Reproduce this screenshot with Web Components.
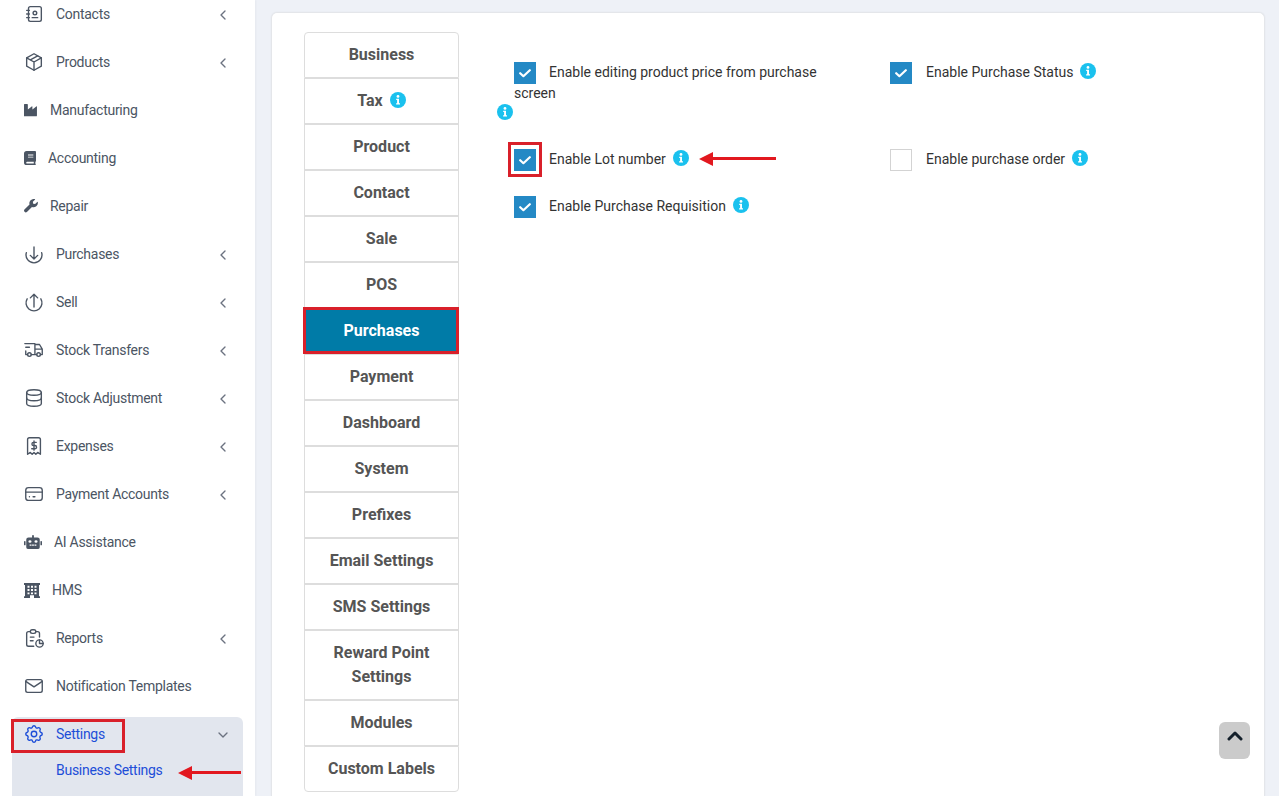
<!DOCTYPE html>
<html lang="en">
<head>
<meta charset="utf-8">
<title>Business Settings</title>
<style>
  html, body { margin: 0; height: 796px; overflow: hidden; }
  body { background: #eef1f7; font-family: Roboto, "Liberation Sans", sans-serif; position: relative; }
  .app { display: flex; height: 796px; overflow: hidden; }
</style>
</head>
<body>
<div class="app">
  <side-bar>
    <nav-item icon="contacts" arrow="left">Contacts</nav-item>
    <nav-item icon="products" arrow="left">Products</nav-item>
    <nav-item icon="industry" solid="14">Manufacturing</nav-item>
    <nav-item icon="book" solid="12">Accounting</nav-item>
    <nav-item icon="wrench" solid="14">Repair</nav-item>
    <nav-item icon="purchases" arrow="left">Purchases</nav-item>
    <nav-item icon="sell" arrow="left">Sell</nav-item>
    <nav-item icon="truck" arrow="left">Stock Transfers</nav-item>
    <nav-item icon="database" arrow="left">Stock Adjustment</nav-item>
    <nav-item icon="receipt" arrow="left">Expenses</nav-item>
    <nav-item icon="card" arrow="left">Payment Accounts</nav-item>
    <nav-item icon="robot" solid="18">AI Assistance</nav-item>
    <nav-item icon="hospital" solid="16">HMS</nav-item>
    <nav-item icon="reports" arrow="left">Reports</nav-item>
    <nav-item icon="mail">Notification Templates</nav-item>
    <nav-group>
      <nav-item icon="settings" arrow="down" active>Settings</nav-item>
      <sub-item>Business Settings</sub-item>
    </nav-group>
  </side-bar>
  <settings-card>
    <tab-list slot="tabs">
      <tab-item>Business</tab-item>
      <tab-item>Tax <info-dot></info-dot></tab-item>
      <tab-item>Product</tab-item>
      <tab-item>Contact</tab-item>
      <tab-item>Sale</tab-item>
      <tab-item>POS</tab-item>
      <tab-item active>Purchases</tab-item>
      <tab-item>Payment</tab-item>
      <tab-item>Dashboard</tab-item>
      <tab-item>System</tab-item>
      <tab-item>Prefixes</tab-item>
      <tab-item>Email Settings</tab-item>
      <tab-item>SMS Settings</tab-item>
      <tab-item>Reward Point Settings</tab-item>
      <tab-item>Modules</tab-item>
      <tab-item>Custom Labels</tab-item>
    </tab-list>
    <check-option checked tight drop-info>Enable editing product price from purchase screen</check-option>
    <check-option checked>Enable Purchase Status</check-option>
    <check-option checked tight>Enable Lot number</check-option>
    <check-option>Enable purchase order</check-option>
    <check-option checked tight>Enable Purchase Requisition</check-option>
  </settings-card>
</div>

<!-- the red marks drawn on top of the screenshot -->
<mark-box style="left:11px;top:719px;width:114px;height:34px"></mark-box>
<mark-box style="left:508px;top:142px;width:34px;height:35px"></mark-box>
<mark-box style="left:303px;top:307px;width:156px;height:47px"></mark-box>
<mark-arrow style="left:699px;top:151px;width:77px"></mark-arrow>
<mark-arrow style="left:178px;top:765px;width:63px"></mark-arrow>
<top-button></top-button>

<script>
const stroke = {
  contacts: '<path d="M20 6v12a2 2 0 0 1 -2 2h-10a2 2 0 0 1 -2 -2v-12a2 2 0 0 1 2 -2h10a2 2 0 0 1 2 2z"/><path d="M10 16h6"/><circle cx="13" cy="11" r="2"/><path d="M4 8h3M4 12h3M4 16h3"/>',
  products: '<path d="M12 3l8 4.500v9l-8 4.500l-8 -4.500v-9z"/><path d="M12 12l8 -4.500M12 12v9M12 12l-8 -4.500M16 5.250l-8 4.500"/>',
  purchases: '<path d="M3.670 10.500a8.700 8.700 0 1 0 16.660 0"/><path d="M12 4.400v13M8 13.500l4 4l4 -4"/>',
  sell: '<path d="M4.540 8.500a8.700 8.700 0 1 0 14.920 0"/><path d="M12 17.500v-14M8 7.500l4 -4l4 4"/>',
  truck: '<circle cx="7" cy="17" r="2"/><circle cx="17" cy="17" r="2"/><path d="M5 17h-2v-4M2 5h11v12M9 17h6M19 17h2v-6h-8M13 6h5l3 5M3 9h4"/>',
  database: '<ellipse cx="12" cy="6" rx="8" ry="3"/><path d="M4 6v6a8 3 0 0 0 16 0v-6"/><path d="M4 12v6a8 3 0 0 0 16 0v-6"/>',
  receipt: '<path d="M5 21v-16a2 2 0 0 1 2 -2h10a2 2 0 0 1 2 2v16l-3 -2l-2 2l-2 -2l-2 2l-2 -2z"/><path d="M14.500 8h-3a1.500 1.500 0 0 0 0 3.500h1.500a1.500 1.500 0 0 1 0 3.500h-3.500M12 6.500v10"/>',
  card: '<rect x="3" y="5" width="18" height="14" rx="3"/><path d="M3 10h18M7 15h.01M11 15h2"/>',
  reports: '<path d="M8 5h-2a2 2 0 0 0 -2 2v12a2 2 0 0 0 2 2h5.700"/><path d="M18 14v4h4"/><path d="M18 11v-4a2 2 0 0 0 -2 -2h-2"/><rect x="8" y="3" width="6" height="4" rx="2"/><circle cx="18" cy="18" r="4"/><path d="M8 11h4M8 15h3"/>',
  mail: '<rect x="3" y="5" width="18" height="14" rx="2"/><path d="M3 7l9 6l9 -6"/>',
  settings: '<path d="M10.325 4.317c.426 -1.756 2.924 -1.756 3.35 0a1.724 1.724 0 0 0 2.573 1.066c1.543 -.94 3.31 .826 2.37 2.37a1.724 1.724 0 0 0 1.065 2.572c1.756 .426 1.756 2.924 0 3.35a1.724 1.724 0 0 0 -1.066 2.573c.94 1.543 -.826 3.31 -2.37 2.37a1.724 1.724 0 0 0 -2.572 1.065c-.426 1.756 -2.924 1.756 -3.35 0a1.724 1.724 0 0 0 -2.573 -1.066c-1.543 .94 -3.31 -.826 -2.37 -2.37a1.724 1.724 0 0 0 -1.065 -2.572c-1.756 -.426 -1.756 -2.924 0 -3.35a1.724 1.724 0 0 0 1.066 -2.573c-.94 -1.543 .826 -3.31 2.37 -2.37c1 .608 2.296 .07 2.572 -1.065z"/><circle cx="12" cy="12" r="3"/>'
};

// filled icons: [viewBox, rendered height, shape]
const solid = {
  industry: ['0 1.800 16 14.200', 13, '<path d="M0 2.500a.7.7 0 0 1 .7-.7h3a.7.7 0 0 1 .7.7v5.200l4.400-3.300a.5.5 0 0 1 .8.400v2.900l4.400-3.300a.5.5 0 0 1 .8.400v9.500a1 1 0 0 1-1 1h-13.800a1 1 0 0 1-1-1z"/>'],
  book: ['.500 0 13.500 16', 14, '<path fill-rule="evenodd" d="M3.500 0h9.500a1 1 0 0 1 1 1v10.500a1 1 0 0 1-.7.900v2.100a.8.8 0 0 1 0 1.500h-9.800a3 3 0 0 1-3-3v-10a3 3 0 0 1 3-3zm.5 12.300a1 1 0 0 0 0 2h7.500v-2zm1-8.300v1h6v-1zm0 2.500v1h6v-1z"/>'],
  wrench: ['0 0 16 16', 14, '<path d="M15.800 3.600a.4.400 0 0 0-.7-.2l-2.400 2.400-2.200-.4-.4-2.200 2.400-2.400a.4.400 0 0 0-.2-.7 5 5 0 0 0-6 6.200l-5.800 5.800a2 2 0 0 0 2.800 2.800l5.800-5.800a5 5 0 0 0 6.700-5.500z"/>'],
  robot: ['0 0 16 15', 14, '<path fill-rule="evenodd" d="M8 0a.8.8 0 0 1 .8.8v2h3.200a2 2 0 0 1 2 2v8.200a2 2 0 0 1-2 2h-8a2 2 0 0 1-2-2v-8.200a2 2 0 0 1 2-2h3.200v-2a.8.8 0 0 1 .8-.8zm-2.700 5.500a1.400 1.400 0 1 0 0 2.800 1.400 1.400 0 0 0 0-2.800zm5.400 0a1.400 1.400 0 1 0 0 2.800 1.400 1.400 0 0 0 0-2.800zm-5.700 4.700v1.300h1.700v-1.300zm2.200 0v1.300h1.600v-1.300zm2.100 0v1.300h1.700v-1.300z"/><rect x="0" y="6.500" width="1.400" height="4.500" rx=".6"/><rect x="14.600" y="6.500" width="1.400" height="4.500" rx=".6"/>'],
  hospital: ['0 0 16 16', 15, '<path fill-rule="evenodd" d="M0 0h16v2h-1v12h1v2h-6v-3h-4v3h-6v-2h1v-12h-1zm3.500 3v2h2v-2zm3.500 0v2h2v-2zm3.500 0v2h2v-2zm-7 3.500v2h2v-2zm3.500 0v2h2v-2zm3.500 0v2h2v-2zm-7 3.500v2h2v-2zm7 0v2h2v-2zm-3.500 0v2h2v-2z"/>']
};

function tablerSvg(inner, size) {
  return `<svg width="${size}" height="${size}" viewBox="0 0 24 24" fill="none" stroke="currentColor" stroke-width="1.5" stroke-linecap="round" stroke-linejoin="round">${inner}</svg>`;
}

class SideBar extends HTMLElement {
  constructor() {
    super();
    this.attachShadow({ mode: 'open' }).innerHTML = `
      <style>
        :host { display: block; flex: 0 0 255px; box-sizing: border-box; height: 796px; overflow: hidden; background: #fff; padding: 0 12px; box-shadow: 1px 0 2px rgba(0,0,0,.04); }
        .list { display: flex; flex-direction: column; gap: 12px; margin-top: -4px; }
      </style>
      <div class="list"><slot></slot></div>`;
  }
}
customElements.define('side-bar', SideBar);

class NavItem extends HTMLElement {
  constructor() {
    super();
    const name = this.getAttribute('icon');
    const width = this.getAttribute('solid');
    const arrow = this.getAttribute('arrow');
    const icon = width
      ? `<svg style="width:${width}px;height:${solid[name][1]}px" viewBox="${solid[name][0]}" preserveAspectRatio="none" fill="currentColor">${solid[name][2]}</svg>`
      : tablerSvg(stroke[name], 22);
    const chevrons = { left: 'M15 6l-6 6l6 6', down: 'M6 9l6 6l6 -6' };
    this.attachShadow({ mode: 'open' }).innerHTML = `
      <style>
        :host { display: flex; align-items: center; height: 36px; box-sizing: border-box; padding: 0 12px 0 11px; color: #4b5563; font-size: 14px; letter-spacing: -.28px; gap: 11px; }
        :host([solid]) { padding-left: 12px; gap: 12px; }
        :host([active]) { color: #1d4ed8; }
        svg { flex: none; display: block; }
        .text { flex: 1; white-space: nowrap; }
        .chev { color: #6b7280; margin-top: 2px; }
      </style>
      ${icon}<span class="text"><slot></slot></span>
      ${arrow ? `<svg class="chev" width="16" height="16" viewBox="0 0 24 24" fill="none" stroke="currentColor" stroke-width="2" stroke-linecap="round" stroke-linejoin="round"><path d="${chevrons[arrow]}"/></svg>` : ''}`;
  }
}
customElements.define('nav-item', NavItem);

class NavGroup extends HTMLElement {
  constructor() {
    super();
    this.attachShadow({ mode: 'open' }).innerHTML = `
      <style>
        :host { display: block; background: #e2e6ee; border-radius: 6px 6px 0 0; height: 100px; margin-top: 1px; }
        ::slotted(nav-item) { margin-top: -1px; }
      </style>
      <slot></slot>`;
  }
}
customElements.define('nav-group', NavGroup);

class SubItem extends HTMLElement {
  constructor() {
    super();
    this.attachShadow({ mode: 'open' }).innerHTML = `
      <style>:host { display: flex; align-items: center; height: 36px; padding-left: 44px; color: #1d4ed8; font-size: 14px; letter-spacing: -.28px; }</style>
      <slot></slot>`;
  }
}
customElements.define('sub-item', SubItem);

class SettingsCard extends HTMLElement {
  constructor() {
    super();
    this.attachShadow({ mode: 'open' }).innerHTML = `
      <style>
        :host { display: flex; flex: 1; min-width: 0; box-sizing: border-box; margin: 12px 14px 0 16px; padding: 19px 32px; background: #fff; border: 1px solid #e4e6ea; border-bottom: 0; border-radius: 6px 6px 0 0; box-shadow: 0 0 2px rgba(0,0,0,.05); }
        .options { flex: 1; min-width: 0; display: grid; grid-template-columns: 376px 1fr; grid-template-rows: 87px 47px 47px; align-content: start; margin: 30px 0 0 55px; }
      </style>
      <slot name="tabs"></slot>
      <div class="options"><slot></slot></div>`;
  }
}
customElements.define('settings-card', SettingsCard);

class TabList extends HTMLElement {
  constructor() {
    super();
    this.attachShadow({ mode: 'open' }).innerHTML = `
      <style>:host { display: block; flex: 0 0 155px; align-self: flex-start; }</style>
      <slot></slot>`;
  }
}
customElements.define('tab-list', TabList);

class TabItem extends HTMLElement {
  constructor() {
    super();
    this.attachShadow({ mode: 'open' }).innerHTML = `
      <style>
        :host { display: block; box-sizing: border-box; padding: 10px 15px; border: 1px solid #ddd; background: #fff; color: #555; font-size: 16px; font-weight: 700; line-height: 24px; text-align: center; }
        :host(:first-child) { border-radius: 4px 4px 0 0; }
        :host(:last-child) { border-radius: 0 0 4px 4px; }
        :host([active]) { background: #007ba7; color: #fff; }
      </style>
      <slot></slot>`;
  }
}
customElements.define('tab-item', TabItem);

class InfoDot extends HTMLElement {
  constructor() {
    super();
    this.attachShadow({ mode: 'open' }).innerHTML = `
      <style>
        :host { display: inline-block; width: 16px; height: 16px; vertical-align: -2px; margin-left: 3px; }
        svg { display: block; }
      </style>
      <svg width="16" height="16" viewBox="0 0 16 16"><circle cx="8" cy="8" r="8" fill="#1ac1ee"/><circle cx="8" cy="4.400" r="1.400" fill="#fff"/><path d="M6.200 6.800h2.800v4.400h1v1.300h-3.900v-1.300h1v-3.100h-.9z" fill="#fff"/></svg>`;
  }
}
customElements.define('info-dot', InfoDot);

class CheckOption extends HTMLElement {
  constructor() {
    super();
    const dropped = this.hasAttribute('drop-info');
    this.attachShadow({ mode: 'open' }).innerHTML = `
      <style>
        :host { display: block; width: 340px; color: #333; font-size: 14px; line-height: 18px; }
        .box { display: inline-block; box-sizing: border-box; width: 22px; height: 22px; margin-right: 14px; vertical-align: -7px; border: 1px solid #d3d3d3; background: #fff; }
        :host([tight]) .box { margin-right: 13px; }
        :host([checked]) .box { background: #2489c5; border-color: #2489c5; }
        .box svg { display: none; margin: 4px; }
        :host([checked]) .box svg { display: block; }
        info-dot { margin-left: 3px; }
        :host([tight]) info-dot { margin-left: 4px; }
        :host([tight]) info-dot.drop, info-dot.drop { display: block; margin: 2px 0 0 -17px; }
      </style>
      <span class="box"><svg width="12" height="12" viewBox="0 0 12 12" fill="none" stroke="#fff" stroke-width="2.200" stroke-linecap="round" stroke-linejoin="round"><path d="M1.200 6.200l3.200 3l6.400 -6"/></svg></span><slot></slot>
      <info-dot class="${dropped ? 'drop' : ''}"></info-dot>`;
  }
}
customElements.define('check-option', CheckOption);

class MarkBox extends HTMLElement {
  constructor() {
    super();
    this.attachShadow({ mode: 'open' }).innerHTML = `
      <style>:host { display: block; position: absolute; box-sizing: border-box; border: 3px solid #d9202a; pointer-events: none; }</style>`;
  }
}
customElements.define('mark-box', MarkBox);

class MarkArrow extends HTMLElement {
  constructor() {
    super();
    this.attachShadow({ mode: 'open' }).innerHTML = `
      <style>
        :host { display: flex; align-items: center; position: absolute; height: 15px; }
        .head { width: 0; height: 0; border: solid transparent; border-width: 7px 14px 7px 0; border-right-color: #e2181f; flex: none; }
        .line { flex: 1; height: 3px; background: #e2181f; }
      </style>
      <span class="head"></span><span class="line"></span>`;
  }
}
customElements.define('mark-arrow', MarkArrow);

class TopButton extends HTMLElement {
  constructor() {
    super();
    this.attachShadow({ mode: 'open' }).innerHTML = `
      <style>
        :host { display: flex; justify-content: center; padding-top: 8px; box-sizing: border-box; position: absolute; left: 1219px; top: 722px; width: 31px; height: 37px; background: #cbcbcb; border-radius: 6px; }
        svg { display: block; }
      </style>
      <svg width="16" height="12" viewBox="0 0 16 12" fill="none" stroke="#14202b" stroke-width="3" stroke-linecap="round" stroke-linejoin="round"><path d="M2 9l6 -6l6 6"/></svg>`;
  }
}
customElements.define('top-button', TopButton);
</script>
</body>
</html>
